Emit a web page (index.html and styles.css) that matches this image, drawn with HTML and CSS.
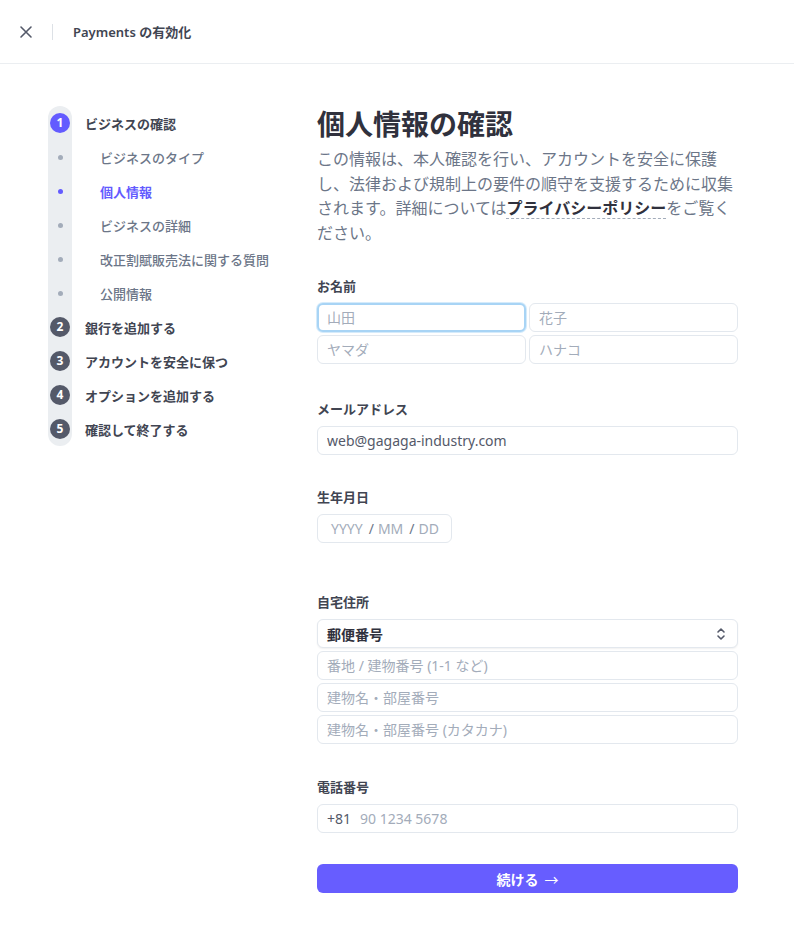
FILE: index.html
```html
<!DOCTYPE html>
<html lang="ja">
<head>
<meta charset="utf-8">
<title>Payments の有効化</title>
<link rel="stylesheet" href="styles.css">
</head>
<body>
<header class="topbar">
  <svg class="close" width="14" height="14" viewBox="0 0 14 14"><path d="M2 2L12 12M12 2L2 12" stroke="#545969" stroke-width="1.6" stroke-linecap="round"/></svg>
  <span class="divider"></span>
  <span class="top-title">Payments の有効化</span>
</header>
<div class="content">
  <nav class="steps">
    <div class="track">
      <div class="mk"><span class="num active">1</span></div>
      <div class="mk"><span class="dot"></span></div>
      <div class="mk"><span class="dot active"></span></div>
      <div class="mk"><span class="dot"></span></div>
      <div class="mk"><span class="dot"></span></div>
      <div class="mk"><span class="dot"></span></div>
      <div class="mk"><span class="num">2</span></div>
      <div class="mk"><span class="num">3</span></div>
      <div class="mk"><span class="num">4</span></div>
      <div class="mk"><span class="num">5</span></div>
    </div>
    <div class="labels">
      <div class="lb step">ビジネスの確認</div>
      <div class="lb sub">ビジネスのタイプ</div>
      <div class="lb sub current">個人情報</div>
      <div class="lb sub">ビジネスの詳細</div>
      <div class="lb sub">改正割賦販売法に関する質問</div>
      <div class="lb sub">公開情報</div>
      <div class="lb step">銀行を追加する</div>
      <div class="lb step">アカウントを安全に保つ</div>
      <div class="lb step">オプションを追加する</div>
      <div class="lb step">確認して終了する</div>
    </div>
  </nav>
  <main class="main">
    <h1 class="title">個人情報の確認</h1>
    <p class="desc">この情報は、本人確認を行い、アカウントを安全に保護し、法律および規制上の要件の順守を支援するために収集されます。詳細については<span class="link">プライバシーポリシー</span>をご覧ください。</p>

    <div class="field f-name">
      <div class="label">お名前</div>
      <div class="name-grid">
        <input class="inp focused" placeholder="山田">
        <input class="inp" placeholder="花子">
        <input class="inp" placeholder="ヤマダ">
        <input class="inp" placeholder="ハナコ">
      </div>
    </div>

    <div class="field f-email">
      <div class="label">メールアドレス</div>
      <input class="inp value" value="web@gagaga-industry.com">
    </div>

    <div class="field f-dob">
      <div class="label">生年月日</div>
      <div class="inp dob"><span class="ph">YYYY</span><span class="sl">/</span><span class="ph">MM</span><span class="sl">/</span><span class="ph">DD</span></div>
    </div>

    <div class="field f-addr">
      <div class="label">自宅住所</div>
      <div class="stack">
        <div class="inp select"><span>郵便番号</span>
          <svg width="10" height="14" viewBox="0 0 10 14"><path d="M2 5L5 2L8 5M2 9L5 12L8 9" fill="none" stroke="#545969" stroke-width="1.6" stroke-linecap="round" stroke-linejoin="round"/></svg>
        </div>
        <input class="inp" placeholder="番地 / 建物番号 (1-1 など)">
        <input class="inp" placeholder="建物名・部屋番号">
        <input class="inp" placeholder="建物名・部屋番号 (カタカナ)">
      </div>
    </div>

    <div class="field f-phone">
      <div class="label">電話番号</div>
      <div class="inp phone"><span class="cc">+81</span><span class="ph">90 1234 5678</span></div>
    </div>

    <button class="btn">続ける <span class="arrow">→</span></button>
  </main>
</div>
</body>
</html>
```

FILE: styles.css
```css
* { box-sizing: border-box; }
html, body { margin: 0; padding: 0; background: #fff; }
body {
  font-family: "Noto Sans", "Noto Sans CJK JP", sans-serif;
  color: #414552;
  width: 794px;
  height: 946px;
  overflow: hidden;
}
.topbar {
  height: 64px;
  border-bottom: 1px solid #ebeef1;
  display: flex;
  align-items: center;
  padding-left: 19px;
}
.close { display: block; }
.divider {
  width: 1px;
  height: 16px;
  background: #dde1e6;
  margin-left: 19px;
  margin-right: 20px;
}
.top-title {
  font-size: 13px;
  font-weight: 600;
  color: #414552;
}
.content {
  display: flex;
  padding: 42px 0 0 48px;
}
.steps {
  width: 269px;
  display: flex;
  padding-top: 0;
}
.track {
  width: 24px;
  background: #ebeef1;
  border-radius: 12px;
  display: flex;
  flex-direction: column;
  align-self: flex-start;
}
.mk {
  height: 34px;
  display: flex;
  align-items: center;
  justify-content: center;
}
.num {
  width: 20px;
  height: 20px;
  border-radius: 50%;
  background: #545969;
  color: #fff;
  font-size: 12px;
  font-weight: 700;
  display: flex;
  align-items: center;
  justify-content: center;
  line-height: 1;
}
.num.active { background: #635bff; }
.dot {
  width: 5px;
  height: 5px;
  border-radius: 50%;
  background: #a3acba;
}
.dot.active { background: #635bff; }
.labels {
  display: flex;
  flex-direction: column;
}
.lb {
  height: 34px;
  display: flex;
  align-items: center;
  font-size: 13px;
  white-space: nowrap;
}
.lb.step {
  padding-left: 13px;
  font-weight: 600;
  color: #414552;
}
.lb.sub {
  padding-left: 28px;
  font-weight: 500;
  color: #6c7688;
}
.lb.sub.current { color: #635bff; font-weight: 600; }

.main {
  width: 421px;
  display: flex;
  flex-direction: column;
}
.title {
  margin: 0;
  font-size: 28px;
  line-height: 36px;
  font-weight: 700;
  color: #30313d;
}
.desc {
  margin: 5px 0 0;
  font-size: 16px;
  line-height: 24.5px;
  color: #6c7688;
}
.link {
  color: #30313d;
  font-weight: 700;
  text-decoration: underline dashed #a3acba;
  text-underline-offset: 4px;
  text-decoration-thickness: 1px;
}
.field { display: flex; flex-direction: column; }
.f-name { margin-top: 32px; }
.f-email { margin-top: 36px; }
.f-dob { margin-top: 33px; }
.f-addr { margin-top: 50px; }
.f-phone { margin-top: 34px; }
.label {
  font-size: 13px;
  line-height: 18px;
  font-weight: 700;
  color: #414552;
  margin-bottom: 8px;
}
.name-grid {
  display: grid;
  grid-template-columns: 209px 209px;
  gap: 3px;
}
.stack {
  display: flex;
  flex-direction: column;
  gap: 3px;
}
.inp {
  height: 29px;
  border: 1px solid #e3e8ee;
  border-radius: 6px;
  padding: 0 9px;
  font-family: inherit;
  font-size: 14px;
  color: #414552;
  background: #fff;
  outline: none;
  width: 100%;
  margin: 0;
}
.inp::placeholder { color: #a3acba; }
.inp.focused {
  border: 2px solid #a8d4f5;
  padding-left: 8px;
  box-shadow: 0 0 0 1px #d5ebfb;
}
.inp.value { color: #545969; }
.dob {
  width: 135px;
  display: flex;
  align-items: center;
  padding-left: 13px;
  color: #a3acba;
}
.dob .ph { color: #a3acba; }
.dob .sl { color: #6c7688; margin: 0 4px 0 6px; }
.select {
  display: flex;
  align-items: center;
  justify-content: space-between;
  font-weight: 700;
  color: #30313d;
  box-shadow: 0 1px 2px rgba(0,0,0,0.06);
  padding-right: 11px;
}
.select svg { display: block; }
.phone {
  display: flex;
  align-items: center;
}
.phone .cc { color: #545969; margin-right: 9px; }
.phone .ph { color: #a3acba; }
.btn {
  margin-top: 31px;
  height: 29px;
  width: 100%;
  border: 0;
  border-radius: 6px;
  background: #675dff;
  color: #fff;
  font-family: inherit;
  font-size: 14px;
  font-weight: 700;
  display: flex;
  align-items: center;
  justify-content: center;
  gap: 6px;
  padding: 0;
}
.arrow { font-weight: 400; }
```
